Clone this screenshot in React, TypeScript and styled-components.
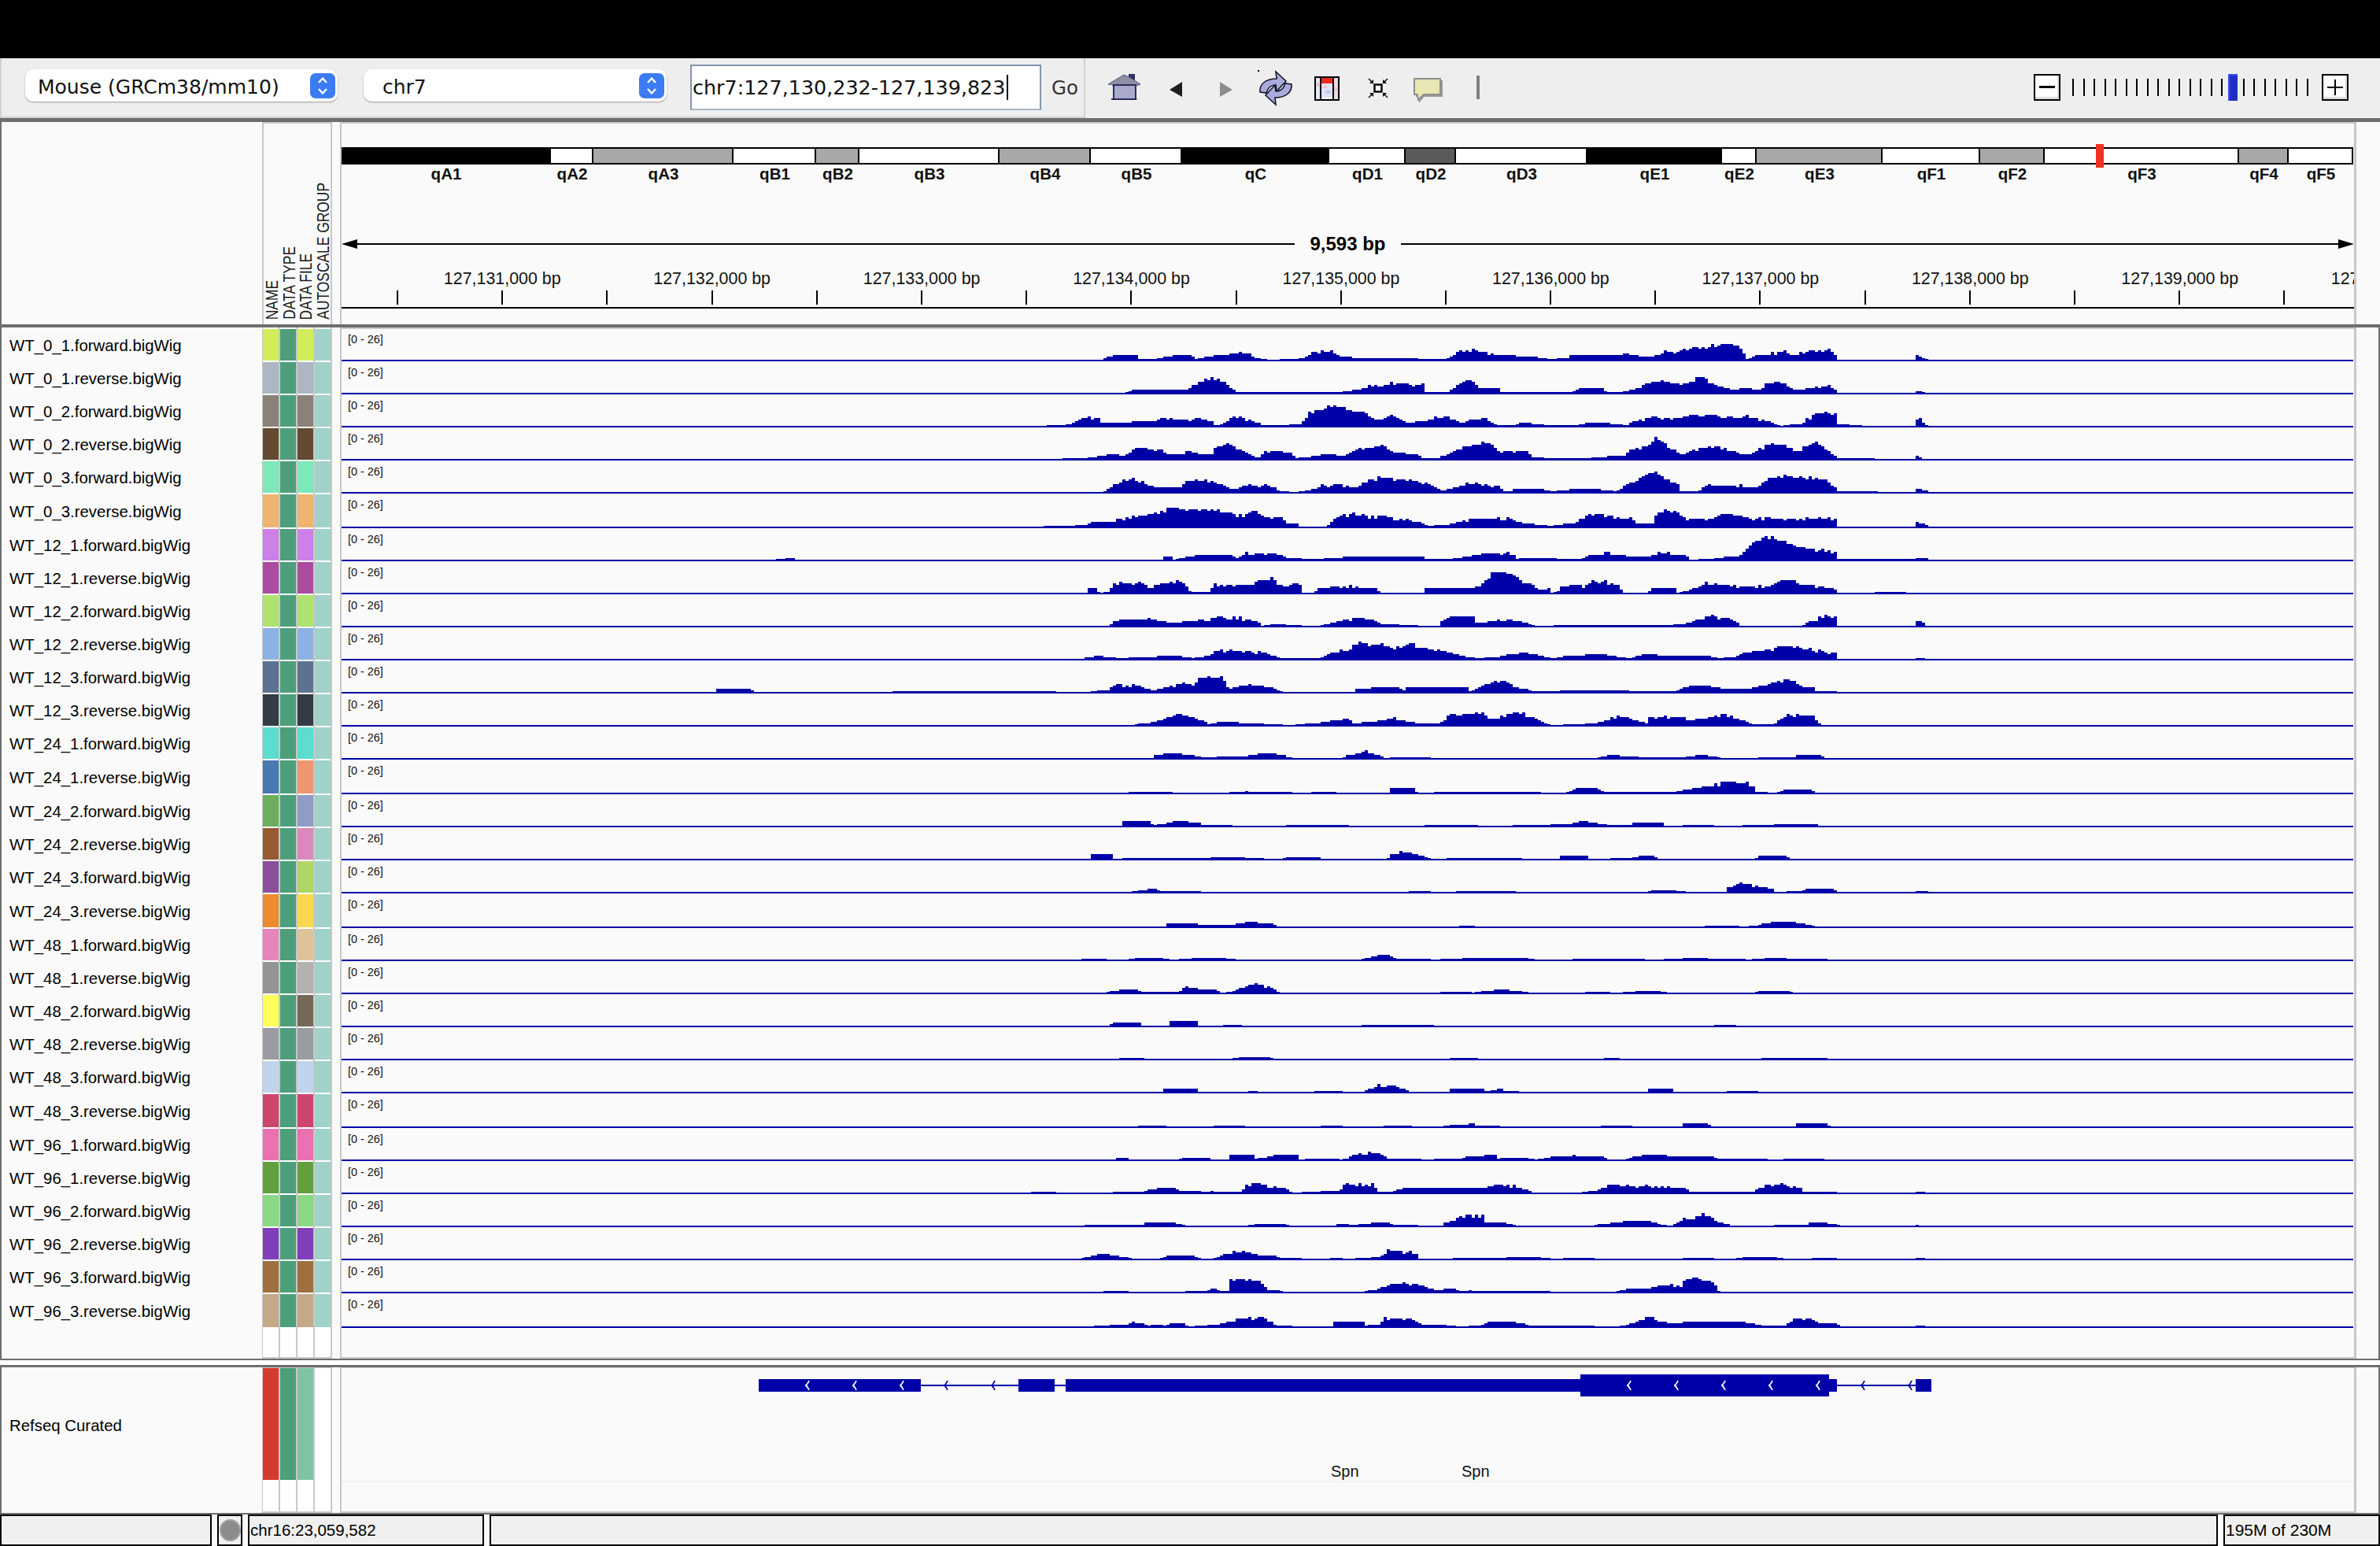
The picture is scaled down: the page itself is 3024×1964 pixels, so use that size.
import React from "react";
import styled, { createGlobalStyle } from "styled-components";

const BLUE = "#0000a8";
const RULE = "#6e6e6e";
const SOFT = "#c8c8c8";
const PANEL = "#fafafa";
const DATA_LEFT = 434;
const DATA_RIGHT = 2990;
const BIN = 4;

const GlobalStyle = createGlobalStyle`
  html, body {
    margin: 0;
    padding: 0;
    background: #ffffff;
  }
  body {
    font-family: "Liberation Sans", Arial, sans-serif;
    color: #000000;
  }
`;

const Page = styled.div`
  width: 3024px;
  height: 1964px;
  overflow: hidden;
  display: flex;
  flex-direction: column;
  background: #ffffff;
`;

const TitleBar = styled.div`
  height: 74px;
  background: #000000;
`;

const Toolbar = styled.div`
  height: 76px;
  display: flex;
  align-items: stretch;
  background: #eeeeee;
  padding-right: 40px;
`;

const LocationBar = styled.div`
  width: 1379px;
  box-sizing: border-box;
  display: flex;
  align-items: center;
  padding-left: 30px;
  border: solid #d2d2d2;
  border-width: 0 2px 2px 2px;
  font-family: "DejaVu Sans", sans-serif;
  font-size: 25px;
  color: #111111;
`;

const Combo = styled.div<{ $width: number; $gap: number; $inset: number }>`
  width: ${(p) => p.$width}px;
  height: 41px;
  box-sizing: border-box;
  margin-right: ${(p) => p.$gap}px;
  margin-top: -5px;
  padding: 0 3px 0 ${(p) => p.$inset}px;
  display: flex;
  align-items: center;
  justify-content: space-between;
  background: #ffffff;
  border-radius: 10px;
  box-shadow: 0 1px 2px rgba(0, 0, 0, 0.35);
`;

const ComboText = styled.span`
  margin-top: 3px;
`;

const Stepper = styled.div`
  width: 32px;
  height: 32px;
  border-radius: 7px;
  background: #3b7cf5;
  display: flex;
  align-items: center;
  justify-content: center;
`;

const LocusInput = styled.div`
  width: 446px;
  height: 58px;
  box-sizing: border-box;
  display: flex;
  align-items: center;
  padding-left: 1px;
  border: 2px solid #8296ad;
  border-bottom-color: #a8b6c6;
  background: #ffffff;
  font-size: 25.4px;
  white-space: nowrap;
`;

const Caret = styled.span`
  width: 2px;
  height: 32px;
  margin-left: 2px;
  background: #000000;
`;

const GoLabel = styled.div`
  margin-left: 13px;
  font-size: 24.5px;
  color: #333333;
`;

const NavIcons = styled.div`
  display: flex;
  align-items: center;
  margin-left: 29px;
  height: 76px;
`;

const NavIcon = styled.svg<{ $left: number; $lift: number }>`
  display: block;
  flex: none;
  overflow: visible;
  margin-left: ${(p) => p.$left}px;
  transform: translateY(${(p) => p.$lift}px);
`;

const ZoomSlider = styled.div`
  margin-left: auto;
  display: flex;
  align-items: center;
  height: 73px;
  gap: 15px;
`;

const ZoomButton = styled.div`
  width: 34px;
  height: 34px;
  box-sizing: border-box;
  border: 2px solid #000000;
  background: #ffffff;
  box-shadow: inset -2px -3px 0 #dddddd;
  display: flex;
  align-items: center;
  justify-content: center;
`;

const ZoomTicks = styled.div`
  width: 300px;
  height: 34px;
  margin-right: 2px;
  display: flex;
  align-items: center;
  justify-content: space-between;
`;

const ZoomTick = styled.div`
  width: 2px;
  height: 22px;
  background: #000000;
`;

const ZoomThumb = styled.div`
  width: 12px;
  height: 34px;
  margin: 0 -5px;
  background: #2030c4;
  box-shadow: inset 2px 2px 0 #3a50e8;
`;

const Rule = styled.div<{ $height: number }>`
  height: ${(p) => p.$height}px;
  background: ${RULE};
`;

const Gap = styled.div`
  height: 6px;
  background: #ffffff;
`;

const Panel = styled.div<{ $height: number }>`
  height: ${(p) => p.$height}px;
  display: flex;
  flex-direction: column;
  background: ${PANEL};
`;

const Row = styled.div<{ $height?: number }>`
  display: grid;
  grid-template-columns: 333px 89px 10px 2559px 33px;
  grid-template-rows: minmax(0, 1fr);
  flex: ${(p) => (p.$height ? "none" : "1")};
  height: ${(p) => (p.$height ? `${p.$height}px` : "auto")};
  min-height: 0;
`;

const NameCell = styled.div`
  box-sizing: border-box;
  border-left: 2px solid ${RULE};
  padding-left: 10px;
  display: flex;
  align-items: center;
  font-size: 20.4px;
  white-space: nowrap;
  background: ${PANEL};
`;

const GeneNameCell = styled(NameCell)`
  padding-top: 4px;
`;

const AttrCell = styled.div`
  display: grid;
  grid-template-columns: repeat(4, 20px);
  column-gap: 2px;
  padding: 0 2px 0 1px;
  background: ${SOFT};
`;

const GeneAttrCell = styled(AttrCell)`
  padding-top: 1px;
`;

const Swatch = styled.div<{ $color: string }>`
  background: ${(p) => p.$color};
  border-bottom: 2px solid #ffffff;
`;

const Blank = styled.div`
  background: #ffffff;
`;

const Gutter = styled.div`
  background: ${PANEL};
`;

const DataCell = styled.div<{ $cap?: boolean; $open?: boolean }>`
  position: relative;
  box-sizing: border-box;
  border-left: 2px solid ${SOFT};
  background: ${(p) => (p.$cap ? SOFT : PANEL)};
  overflow: ${(p) => (p.$open ? "visible" : "hidden")};
  z-index: ${(p) => (p.$open ? 1 : "auto")};
`;

const SidePad = styled.div<{ $edge?: boolean }>`
  box-sizing: border-box;
  border-left: 3px solid ${SOFT};
  border-right: ${(p) => (p.$edge ? `2px solid ${RULE}` : "none")};
  background: ${PANEL};
`;

const HeaderAttr = styled.div`
  box-sizing: border-box;
  border: solid ${SOFT};
  border-width: 2px 2px 0 2px;
  background: ${PANEL};
  display: grid;
  grid-template-columns: repeat(4, 21.5px);
  align-items: end;
  padding-bottom: 6px;
`;

const AttrTitle = styled.div`
  writing-mode: vertical-rl;
  transform: rotate(180deg) scaleX(1.3);
  font-size: 17.4px;
  line-height: 21px;
  white-space: nowrap;
  color: #1a1a1a;
`;

const HeaderData = styled.div`
  box-sizing: border-box;
  height: 100%;
  border-top: 2px solid ${SOFT};
  display: flex;
  flex-direction: column;
`;

const Cytoband = styled.div`
  position: relative;
  display: flex;
  margin-top: 30px;
  width: 2557px;
`;

const BandColumn = styled.div`
  flex: none;
  display: flex;
  flex-direction: column;
  align-items: center;
`;

const BandBar = styled.div<{ $stain: string }>`
  align-self: stretch;
  height: 22px;
  box-sizing: border-box;
  border: solid #000000;
  border-width: 2px 2px 2px 0;
  background: ${(p) => p.$stain};
`;

const BandName = styled.div`
  font-size: 20.6px;
  font-weight: bold;
  line-height: 24px;
  margin-bottom: 1px;
  white-space: nowrap;
  color: #111111;
`;

const Marker = styled.div`
  position: absolute;
  top: -4px;
  width: 10px;
  height: 30px;
  background: #ee3124;
`;

const SpanRow = styled.div`
  display: flex;
  align-items: center;
  height: 28px;
  margin-top: 62px;
`;

const SpanLine = styled.div`
  flex: 1;
  height: 2px;
  background: #000000;
`;

const SpanText = styled.div`
  width: 135px;
  text-align: center;
  font-size: 24px;
  font-weight: bold;
  line-height: 28px;
`;

const RulerLabels = styled.div`
  display: flex;
  margin-top: 16px;
  padding-left: 71px;
  overflow: hidden;
  width: 2557px;
  box-sizing: border-box;
`;

const RulerLabel = styled.div`
  flex: none;
  width: 266.45px;
  text-align: center;
  font-size: 21.4px;
  line-height: 28px;
  white-space: nowrap;
  color: #111111;
`;

const RulerTicks = styled.div`
  display: flex;
  margin-top: 1px;
  padding-left: 70px;
`;

const RulerTick = styled.div`
  flex: none;
  width: 133.2px;
  height: 18px;
  box-sizing: border-box;
  border-left: 2px solid #000000;
`;

const RulerLine = styled.div`
  margin-top: 3px;
  height: 2px;
  background: #000000;
`;

const RangeLabel = styled.div`
  position: absolute;
  left: 8px;
  top: 5px;
  font-size: 14.4px;
  line-height: 16px;
  color: #111111;
  white-space: nowrap;
`;

const Chart = styled.svg`
  display: block;
  width: 2557px;
  height: 100%;
`;

const GeneChart = styled(Chart)`
  height: 185px;
`;

const GeneName = styled.div<{ $left: number }>`
  position: absolute;
  left: ${(p) => p.$left}px;
  top: 120px;
  font-size: 20px;
  line-height: 24px;
  color: #111111;
`;

const StatusBar = styled.div`
  height: 40px;
  display: flex;
  gap: 7px;
  background: ${PANEL};
`;

const StatusCell = styled.div<{ $width?: number; $size?: number }>`
  box-sizing: border-box;
  flex: ${(p) => (p.$width ? `0 0 ${p.$width}px` : "1")};
  border: 2px solid #000000;
  background: #f0f0f0;
  display: flex;
  align-items: center;
  font-size: ${(p) => p.$size ?? 20.5}px;
  padding-left: 1px;
  white-space: nowrap;
`;

const StatusLamp = styled.div`
  width: 27px;
  height: 28px;
  border-radius: 50%;
  background: #8c8c8c;
  border: 2px solid #a2a2a2;
  box-sizing: border-box;
`;

type Point = [number, number];

interface TrackType {
  name: string;
  nameColor: string;
  fileColor: string;
  tall?: boolean;
  profile: Point[];
}

const upper = (z: number) => 1350 + z / 1.4255;
const lower = (z: number) => 1300 + z / 1.3635;

const upperProfiles: Point[][] = [
  [[70,0],[90,5],[135,5],[140,1],[170,1],[200,5],[235,5],[240,1],[285,6],[335,9],[350,2],[380,0],[440,2],[450,9],[485,13],[500,5],[540,2],[590,2],[610,3],[655,1],[695,1],[710,7],[742,13],[790,6],[855,4],[880,1],[915,2],[920,5],[975,5],[1015,8],[1060,3],[1090,9],[1120,12],[1170,15],[1190,21],[1225,18],[1240,1],[1255,5],[1305,10],[1330,5],[1350,11],[1390,11],[1403,5],[1404,0],[1545,0],[1546,6],[1560,2],[1568,1]],
  [[115,0],[125,3],[170,5],[185,3],[230,5],[240,10],[265,19],[295,13],[315,1],[355,1],[445,1],[500,1],[540,4],[555,8],[590,9],[600,13],[655,9],[656,1],[700,1],[715,10],[740,17],[755,6],[790,5],[795,1],[835,1],[925,1],[935,5],[975,7],[985,1],[1010,1],[1040,5],[1075,14],[1130,12],[1158,20],[1190,8],[1220,3],[1230,7],[1265,3],[1275,10],[1305,13],[1330,3],[1365,7],[1390,7],[1403,2],[1404,0],[1545,0],[1546,3],[1560,1],[1568,0]],
  [[-60,0],[0,1],[15,2],[35,9],[68,9],[70,5],[100,3],[135,6],[170,7],[185,11],[225,7],[270,7],[275,1],[290,2],[305,9],[330,9],[355,4],[360,1],[395,1],[430,2],[450,17],[490,25],[540,17],[570,7],[595,13],[625,4],[660,7],[665,9],[700,9],[730,3],[735,9],[770,7],[790,1],[820,1],[825,3],[850,3],[880,1],[930,1],[945,3],[990,3],[1025,1],[1030,5],[1075,13],[1100,8],[1160,15],[1210,11],[1240,13],[1285,5],[1300,0],[1340,3],[1368,17],[1402,16],[1403,2],[1445,1],[1448,0],[1545,0],[1546,9],[1558,9],[1560,1],[1568,1]],
  [[-40,0],[40,1],[65,3],[100,7],[110,3],[135,13],[145,15],[185,9],[195,5],[220,5],[225,9],[270,5],[275,13],[305,19],[330,9],[355,1],[365,7],[418,7],[420,1],[450,3],[480,7],[510,3],[530,11],[580,17],[600,9],[645,5],[650,1],[680,1],[710,10],[745,18],[775,20],[790,9],[845,9],[850,3],[880,1],[905,1],[950,1],[985,3],[1020,5],[1030,13],[1060,16],[1075,29],[1090,20],[1120,5],[1140,11],[1185,17],[1215,8],[1245,5],[1280,17],[1303,17],[1330,9],[1365,21],[1390,9],[1405,1],[1470,1],[1472,0],[1545,0],[1546,5],[1555,1]],
  [[75,0],[100,11],[125,16],[160,8],[180,5],[210,7],[230,13],[270,13],[310,3],[330,8],[375,9],[395,1],[425,0],[450,3],[470,7],[500,10],[530,5],[575,19],[620,15],[640,13],[670,7],[690,1],[705,5],[755,13],[765,7],[795,7],[796,1],[815,1],[816,3],[870,3],[890,1],[950,5],[975,3],[1005,1],[1030,13],[1070,25],[1115,9],[1120,1],[1150,1],[1170,9],[1230,7],[1260,5],[1275,17],[1310,21],[1385,15],[1403,5],[1404,1],[1545,0],[1546,5],[1568,1]],
  [[-33,0],[-30,1],[0,1],[45,2],[50,5],[75,5],[100,9],[130,13],[165,17],[190,21],[230,23],[290,19],[325,13],[340,17],[360,17],[365,11],[395,13],[405,5],[425,3],[430,0],[480,0],[490,9],[525,17],[555,13],[600,11],[650,5],[665,1],[700,3],[735,9],[770,9],[805,11],[830,5],[885,1],[930,5],[950,15],[980,15],[1035,9],[1040,3],[1070,3],[1075,17],[1105,21],[1135,9],[1170,9],[1205,17],[1245,9],[1305,11],[1360,9],[1385,11],[1403,7],[1404,0],[1545,0],[1546,7],[1568,1]],
  [[-520,0],[-518,1],[-485,2],[-483,0],[184,0],[185,4],[200,4],[201,0],[240,5],[300,7],[315,2],[335,9],[385,8],[408,2],[460,1],[510,3],[640,3],[655,4],[650,1],[705,1],[760,7],[795,9],[820,5],[821,1],[830,2],[845,2],[940,1],[955,5],[990,8],[1030,4],[1060,4],[1085,8],[1130,5],[1135,0],[1172,1],[1225,5],[1250,20],[1275,30],[1330,17],[1355,14],[1400,8],[1405,1],[1545,1],[1546,2],[1568,2]],
];

const lowerProfiles: Point[][] = [
  [[110,0],[112,5],[130,5],[131,0],[150,1],[155,12],[205,12],[225,6],[235,11],[265,14],[285,8],[290,1],[325,1],[330,10],[385,10],[430,18],[450,9],[480,9],[485,0],[505,0],[510,5],[550,9],[580,7],[615,5],[618,0],[695,0],[696,5],[770,7],[790,9],[820,28],[845,25],[870,12],[895,3],[915,6],[916,0],[928,3],[930,7],[965,7],[990,15],[1020,12],[1040,3],[1041,0],[1085,0],[1086,5],[1130,5],[1131,0],[1150,2],[1185,12],[1240,7],[1290,9],[1320,16],[1370,8],[1405,6],[1410,0],[1475,0],[1476,1],[1530,1],[1532,0]],
  [[150,0],[155,5],[180,9],[230,7],[265,3],[275,5],[325,9],[370,11],[410,4],[415,0],[430,2],[480,1],[482,0],[515,0],[525,2],[560,8],[605,9],[622,2],[685,1],[688,0],[722,0],[725,5],[735,11],[780,11],[782,3],[805,5],[835,9],[865,5],[885,1],[887,0],[955,1],[990,1],[1020,1],[1120,1],[1130,2],[1150,3],[1190,13],[1235,7],[1242,1],[1245,0],[1350,0],[1365,7],[1395,12],[1408,12],[1410,0],[1545,0],[1546,7],[1565,4]],
  [[105,0],[110,2],[130,4],[165,1],[230,3],[260,5],[295,1],[320,4],[335,9],[370,11],[420,7],[445,1],[515,1],[540,9],[565,11],[570,17],[595,21],[600,16],[620,18],[650,13],[675,18],[700,11],[720,12],[765,3],[790,1],[825,3],[860,9],[890,5],[920,1],[945,4],[1000,6],[1050,1],[1085,7],[1115,3],[1130,4],[1185,4],[1205,1],[1235,3],[1255,9],[1285,10],[1320,17],[1380,9],[1410,7],[1412,0],[1545,0],[1546,1],[1560,1]],
  [[-532,0],[-530,3],[-470,3],[-468,0],[18,1],[55,1],[60,0],[118,0],[120,1],[150,3],[152,8],[195,9],[225,2],[240,5],[265,9],[300,9],[305,17],[345,17],[360,4],[380,9],[425,7],[445,1],[450,0],[575,0],[577,3],[600,5],[650,5],[660,2],[662,5],[770,5],[772,1],[785,3],[790,8],[835,14],[850,7],[885,1],[920,1],[965,3],[1030,2],[1070,1],[1130,1],[1150,7],[1180,8],[1225,3],[1255,3],[1270,6],[1325,17],[1350,7],[1372,5],[1374,1],[1410,1],[1412,0]],
  [[195,0],[197,2],[220,3],[245,8],[270,14],[320,4],[322,1],[335,3],[375,3],[430,1],[470,0],[475,1],[505,2],[560,8],[575,2],[625,6],[640,8],[690,2],[695,2],[725,3],[740,14],[800,14],[805,8],[855,16],[885,9],[912,1],[915,0],[955,1],[990,2],[1040,11],[1080,2],[1085,9],[1145,10],[1150,5],[1210,12],[1250,6],[1265,1],[1300,1],[1320,11],[1370,11],[1382,1],[1384,0]],
  [[225,0],[226,3],[258,7],[295,3],[315,1],[332,1],[340,2],[390,3],[420,7],[455,3],[458,1],[470,0],[555,0],[560,3],[595,8],[625,2],[626,0],[650,1],[703,1],[705,0],[995,0],[1000,2],[1020,4],[1050,2],[1085,1],[1140,1],[1175,4],[1205,1],[1207,0],[1335,1],[1340,3],[1385,3],[1388,0]],
  [[183,0],[185,1],[330,0],[382,1],[386,3],[390,1],[435,1],[495,0],[500,1],[540,1],[545,0],[633,0],[634,6],[680,6],[682,0],[740,1],[855,1],[940,0],[955,5],[995,5],[1010,1],[1060,1],[1125,1],[1160,5],[1205,10],[1220,15],[1265,10],[1270,1],[1305,0],[1318,4],[1368,3],[1370,0]],
  [[115,0],[172,0],[173,6],[222,6],[224,1],[250,3],[262,6],[308,4],[310,1],[410,0],[500,1],[630,0],[760,1],[815,0],[945,2],[970,6],[1015,1],[1055,1],[1058,3],[1108,3],[1110,0],[1175,1],[1220,0],[1330,2],[1375,2],[1378,0]],
  [[117,0],[118,6],[155,6],[157,0],[185,1],[290,1],[360,2],[385,3],[386,1],[445,0],[460,2],[515,2],[517,0],[632,0],[635,5],[665,9],[705,1],[706,0],[760,1],[800,1],[930,0],[931,4],[978,4],[980,0],[1050,1],[1065,3],[1095,3],[1100,0],[1270,0],[1272,3],[1325,3],[1327,0]],
  [[180,0],[205,2],[225,4],[240,1],[250,1],[305,1],[306,0],[665,0],[666,1],[703,1],[705,0],[800,1],[855,1],[857,0],[1078,0],[1100,3],[1145,1],[1148,0],[1216,0],[1218,4],[1240,11],[1270,8],[1300,3],[1302,0],[1345,1],[1370,5],[1405,4],[1410,0],[1545,0],[1546,1],[1568,1]],
  [[248,0],[249,3],[290,5],[305,2],[365,2],[388,6],[436,3],[438,0],[755,0],[756,1],[780,1],[782,0],[1183,0],[1184,1],[1238,1],[1240,0],[1270,1],[1280,4],[1320,7],[1372,1],[1374,0]],
  [[98,0],[100,1],[145,1],[147,0],[175,0],[210,3],[250,1],[252,0],[285,1],[310,3],[365,1],[367,0],[585,0],[612,5],[635,5],[650,1],[705,1],[706,0],[735,1],[845,3],[885,1],[887,0],[1020,1],[1078,1],[1080,0],[1135,1],[1165,3],[1190,1],[1250,1],[1252,0],[1270,1],[1318,3],[1325,1],[1395,1],[1397,0]],
  [[142,0],[143,1],[195,5],[208,1],[270,1],[285,9],[300,5],[337,3],[340,0],[360,1],[385,9],[405,13],[440,3],[443,0],[722,0],[723,1],[775,1],[776,0],[790,1],[825,4],[873,1],[875,0],[974,0],[975,1],[1017,1],[1018,0],[1055,1],[1072,3],[1115,1],[1117,0],[1265,0],[1266,1],[1300,3],[1335,1],[1337,0]],
  [[152,0],[153,4],[203,4],[205,0],[255,0],[256,6],[300,6],[301,0],[345,0],[346,1],[378,1],[380,0],[585,0],[586,1],[650,1],[655,1],[675,1],[713,1],[715,0],[1197,0],[1198,1],[1232,1],[1234,0]],
  [[165,0],[166,1],[208,1],[210,0],[360,0],[375,2],[415,3],[432,1],[434,0],[736,0],[737,1],[788,1],[790,0],[1005,0],[1006,1],[1030,1],[1032,0],[1276,0],[1277,1],[1392,1],[1394,0]],
  [[243,0],[244,3],[300,3],[302,0],[388,0],[390,1],[408,1],[410,0],[505,0],[506,1],[555,1],[557,0],[590,0],[595,2],[620,8],[645,7],[668,2],[670,0],[740,0],[741,3],[775,4],[796,4],[800,1],[820,2],[830,5],[835,1],[883,0],[1080,0],[1081,3],[1125,3],[1127,0],[1220,0],[1221,1],[1272,1],[1274,0]],
  [[197,0],[198,1],[248,1],[250,0],[330,0],[331,1],[385,1],[387,0],[515,0],[516,1],[555,1],[557,0],[622,0],[623,1],[670,1],[672,0],[725,0],[726,1],[770,3],[782,3],[785,1],[827,1],[829,0],[1000,0],[1001,1],[1052,1],[1054,0],[1140,0],[1141,3],[1188,3],[1190,0],[1338,0],[1339,3],[1392,3],[1398,0]],
  [[158,0],[159,2],[182,2],[184,0],[266,0],[285,3],[322,2],[324,0],[355,0],[356,5],[400,7],[402,1],[425,3],[440,6],[475,5],[478,0],[495,1],[548,1],[550,0],[562,1],[575,7],[605,10],[627,6],[628,1],[687,1],[689,0],[712,0],[713,1],[760,1],[765,3],[800,5],[820,5],[822,1],[843,3],[885,1],[887,0],[915,3],[950,3],[953,10],[956,3],[1008,3],[1010,0],[1045,0],[1060,4],[1095,7],[1135,3],[1145,3],[1190,5],[1205,1],[1287,1],[1289,0],[1340,1],[1385,1],[1387,0]],
  [[14,1],[56,1],[58,0],[153,0],[154,1],[210,1],[214,3],[255,7],[275,2],[310,2],[312,0],[327,2],[335,1],[380,1],[385,7],[410,11],[440,7],[462,4],[464,0],[505,1],[550,3],[556,9],[610,9],[612,1],[640,1],[660,6],[695,7],[715,5],[770,5],[785,6],[830,11],[865,5],[882,1],[884,0],[965,0],[995,3],[1010,9],[1050,9],[1070,7],[1110,8],[1150,5],[1155,1],[1190,1],[1250,1],[1268,1],[1272,5],[1315,11],[1350,5],[1352,1],[1410,1],[1412,0],[1545,0],[1546,1],[1560,1]],
  [[105,0],[106,1],[158,1],[160,0],[165,1],[208,1],[210,3],[232,3],[262,3],[278,1],[280,0],[392,0],[393,1],[425,3],[462,1],[464,0],[540,0],[542,3],[575,1],[590,2],[630,5],[640,1],[683,1],[685,0],[728,0],[730,3],[760,11],[800,11],[802,4],[838,3],[853,1],[855,0],[988,0],[990,1],[1040,5],[1088,5],[1105,1],[1125,0],[1140,7],[1180,14],[1200,6],[1225,1],[1228,0],[1298,0],[1300,1],[1360,1],[1362,3],[1395,3],[1412,1],[1414,0],[1545,0],[1546,1],[1552,0]],
  [[100,0],[102,1],[130,5],[150,5],[185,1],[187,0],[237,0],[250,3],[290,4],[305,1],[307,0],[330,0],[345,5],[360,7],[402,9],[405,3],[440,3],[445,1],[482,1],[484,0],[530,0],[531,1],[553,1],[555,0],[600,1],[620,3],[632,9],[655,9],[684,6],[686,0],[745,0],[746,1],[830,1],[865,3],[910,1],[912,0],[935,0],[936,1],[988,1],[990,0],[1140,0],[1141,1],[1197,1],[1199,0],[1235,0],[1236,1],[1270,3],[1315,1],[1317,0],[1365,0],[1366,1],[1410,1],[1412,0],[1545,0],[1546,1],[1560,1]],
  [[140,0],[141,1],[183,1],[185,0],[280,0],[281,1],[320,1],[322,3],[338,3],[340,1],[355,1],[356,13],[385,17],[410,13],[425,3],[448,1],[450,0],[590,0],[592,1],[615,3],[635,9],[685,9],[710,3],[725,1],[726,3],[752,3],[754,1],[772,1],[775,3],[778,1],[880,1],[910,1],[912,0],[1025,0],[1045,3],[1075,3],[1100,7],[1140,7],[1145,13],[1155,17],[1195,13],[1205,1],[1207,0]],
  [[105,0],[140,1],[180,3],[190,6],[220,1],[225,3],[245,1],[255,3],[280,3],[285,0],[310,1],[340,3],[380,9],[410,11],[432,5],[440,1],[490,0],[535,0],[536,5],[590,6],[592,1],[620,3],[625,9],[670,11],[690,3],[745,1],[750,0],[790,1],[810,6],[850,6],[880,1],[950,1],[1025,0],[1045,1],[1075,9],[1100,9],[1120,3],[1145,5],[1200,7],[1250,5],[1285,1],[1320,1],[1335,9],[1365,9],[1385,3],[1412,3],[1414,0],[1545,0],[1546,1],[1560,1]],
];

const profiles: Point[][] = [
  ...upperProfiles.map((p) => p.map(([z, h]): Point => [upper(z), h])),
  ...lowerProfiles.map((p) => p.map(([z, h]): Point => [lower(z), h])),
];

const trackMeta: [string, string, string][] = [
  ["WT_0_1.forward.bigWig", "#d2ed5c", "#d2ed5c"],
  ["WT_0_1.reverse.bigWig", "#acb7c3", "#acb7c3"],
  ["WT_0_2.forward.bigWig", "#8a8278", "#8a8278"],
  ["WT_0_2.reverse.bigWig", "#634a30", "#634a30"],
  ["WT_0_3.forward.bigWig", "#7de8b8", "#7de8b8"],
  ["WT_0_3.reverse.bigWig", "#f0b472", "#f0b472"],
  ["WT_12_1.forward.bigWig", "#cc80e8", "#cc80e8"],
  ["WT_12_1.reverse.bigWig", "#ac4ca0", "#ac4ca0"],
  ["WT_12_2.forward.bigWig", "#ade36e", "#ade36e"],
  ["WT_12_2.reverse.bigWig", "#8cb2e3", "#8cb2e3"],
  ["WT_12_3.forward.bigWig", "#5d7291", "#5d7291"],
  ["WT_12_3.reverse.bigWig", "#333b47", "#333b47"],
  ["WT_24_1.forward.bigWig", "#5ddcd0", "#5ddcd0"],
  ["WT_24_1.reverse.bigWig", "#4a78b0", "#ee9670"],
  ["WT_24_2.forward.bigWig", "#6cae5c", "#8e9cc6"],
  ["WT_24_2.reverse.bigWig", "#985a30", "#db88bc"],
  ["WT_24_3.forward.bigWig", "#8c4f9c", "#b0d668"],
  ["WT_24_3.reverse.bigWig", "#ee8a30", "#f8d650"],
  ["WT_48_1.forward.bigWig", "#e685bc", "#dfc398"],
  ["WT_48_1.reverse.bigWig", "#949494", "#b2b2b2"],
  ["WT_48_2.forward.bigWig", "#ffff5a", "#756a58"],
  ["WT_48_2.reverse.bigWig", "#999ca0", "#999ca0"],
  ["WT_48_3.forward.bigWig", "#bfd4ec", "#bfd4ec"],
  ["WT_48_3.reverse.bigWig", "#cb456c", "#cb456c"],
  ["WT_96_1.forward.bigWig", "#ea72b0", "#ea72b0"],
  ["WT_96_1.reverse.bigWig", "#61a03c", "#61a03c"],
  ["WT_96_2.forward.bigWig", "#8ad884", "#8ad884"],
  ["WT_96_2.reverse.bigWig", "#803fb8", "#803fb8"],
  ["WT_96_3.forward.bigWig", "#a06f40", "#a06f40"],
  ["WT_96_3.reverse.bigWig", "#c4a888", "#c4a888"],
];

const tallRows = [5, 13, 17, 23, 29];

const tracks: TrackType[] = trackMeta.map(([name, nameColor, fileColor], i) => ({
  name,
  nameColor,
  fileColor,
  tall: tallRows.includes(i),
  profile: profiles[i],
}));

const heightAt = (profile: Point[], x: number) => {
  for (let i = 1; i < profile.length; i++) {
    const [x0, h0] = profile[i - 1];
    const [x1, h1] = profile[i];
    if (x >= x0 && x <= x1) {
      return x1 === x0 ? h1 : h0 + ((h1 - h0) * (x - x0)) / (x1 - x0);
    }
  }
  return 0;
};

const wigglePath = (profile: Point[], base: number, seed: number) => {
  let d = `M${DATA_LEFT} ${base}`;
  for (let x = DATA_LEFT; x < DATA_RIGHT; x += BIN) {
    let h = heightAt(profile, x + BIN / 2);
    const n = Math.sin(x * 12.9898 + seed * 78.233) * 43758.5453;
    const r = n - Math.floor(n);
    if (h >= 7) h += r < 0.2 ? -2 : r > 0.8 ? 2 : 0;
    h = h < 1.5 ? Math.round(h) : Math.round(h / 2) * 2;
    d += `V${base - h}H${x + BIN}`;
  }
  return `${d}V${base}Z`;
};

const bands: { name: string; end: number; stain: string }[] = [
  { name: "qA1", end: 700, stain: "#000000" },
  { name: "qA2", end: 754, stain: "#ffffff" },
  { name: "qA3", end: 932, stain: "#a8a8a8" },
  { name: "qB1", end: 1037, stain: "#ffffff" },
  { name: "qB2", end: 1092, stain: "#a8a8a8" },
  { name: "qB3", end: 1270, stain: "#ffffff" },
  { name: "qB4", end: 1386, stain: "#a8a8a8" },
  { name: "qB5", end: 1502, stain: "#ffffff" },
  { name: "qC", end: 1689, stain: "#000000" },
  { name: "qD1", end: 1786, stain: "#ffffff" },
  { name: "qD2", end: 1850, stain: "#5a5a5a" },
  { name: "qD3", end: 2017, stain: "#ffffff" },
  { name: "qE1", end: 2188, stain: "#000000" },
  { name: "qE2", end: 2232, stain: "#ffffff" },
  { name: "qE3", end: 2392, stain: "#a8a8a8" },
  { name: "qF1", end: 2516, stain: "#ffffff" },
  { name: "qF2", end: 2598, stain: "#a8a8a8" },
  { name: "qF3", end: 2845, stain: "#ffffff" },
  { name: "qF4", end: 2908, stain: "#a8a8a8" },
  { name: "qF5", end: 2990, stain: "#ffffff" },
];

const rulerStops = [131, 132, 133, 134, 135, 136, 137, 138, 139, 140];
const tickCount = 19;
const sliderSlots = 23;
const sliderThumb = 15;

const StepperIcon: React.FC = () => (
  <svg width="14" height="24" viewBox="0 0 14 24" fill="none" stroke="#ffffff" strokeWidth="2.4">
    <path d="M2 8 L7 2.5 L12 8" />
    <path d="M2 16 L7 21.5 L12 16" />
  </svg>
);

const HomeIcon: React.FC = () => (
  <NavIcon $left={0} $lift={-1} width="42" height="34" viewBox="0 0 42 34">
    <rect x="26" y="0" width="8" height="8" fill="#2f2f68" />
    <path d="M0 13 L20 1 L27 4 L41 13 L36 15 L6 15 Z" fill="#8e8ea6" stroke="#55557a" strokeWidth="1" />
    <rect x="7" y="14" width="28" height="18" fill="#a9a9cb" stroke="#2c2c5c" strokeWidth="2" />
    <rect x="4" y="31" width="34" height="2" fill="#2c2c5c" />
    <path d="M37 15 V33 M0 15 H5" stroke="#ffffff" strokeWidth="1.5" />
  </NavIcon>
);

const ArrowIcon: React.FC<{ left: number; back?: boolean }> = ({ left, back }) => (
  <NavIcon $left={left} $lift={1} width="16" height="19" viewBox="0 0 16 19">
    {back ? (
      <path d="M0 10 L16 0 L16 19 Z" fill="#1e1e1e" />
    ) : (
      <path d="M16 10 L0 0 L0 19 Z" fill="#8c8c8c" />
    )}
  </NavIcon>
);

const RefreshIcon: React.FC = () => (
  <NavIcon $left={34} $lift={0} width="42" height="44" viewBox="0 0 42 44">
    <rect x="-2" y="-1" width="2" height="2" fill="#000000" />
    <g fill="#a9abdc" stroke="#15152a" strokeWidth="1.6" strokeLinejoin="miter">
      <path d="M1 27 C0 17 8 10 22 10 L21 1 L34 13 L22 26 L21 18 C15 18 11 21 9 28 Z" />
      <path d="M41 17 C42 27 34 34 20 34 L21 43 L8 31 L20 18 L21 26 C27 26 31 23 33 16 Z" />
    </g>
  </NavIcon>
);

const RegionIcon: React.FC = () => (
  <NavIcon $left={28} $lift={0} width="32" height="31" viewBox="0 0 32 31">
    <rect x="0" y="0" width="32" height="31" fill="#000000" />
    <rect x="2" y="2" width="28" height="27" fill="#ffffff" />
    <rect x="2" y="2" width="5" height="27" fill="#e6e6f8" />
    <rect x="25" y="2" width="5" height="27" fill="#ecd9e0" />
    <rect x="7" y="2" width="2" height="27" fill="#000000" />
    <rect x="23" y="2" width="2" height="27" fill="#000000" />
    <rect x="9" y="2" width="14" height="7" fill="#ee2a1c" />
    <rect x="9" y="9" width="14" height="18" fill="#dfe2f6" />
    <rect x="10" y="12" width="6" height="3" fill="#eec8c4" />
    <rect x="14" y="18" width="7" height="4" fill="#c4c8f0" />
    <rect x="3" y="8" width="3" height="5" fill="#eebcbc" />
    <rect x="26" y="14" width="3" height="4" fill="#eebcbc" />
  </NavIcon>
);

const CollapseIcon: React.FC = () => (
  <NavIcon $left={36} $lift={0} width="26" height="26" viewBox="0 0 26 26">
    <rect x="8.5" y="8.5" width="9" height="9" fill="#ffffff" stroke="#000000" strokeWidth="2.4" />
    <g stroke="#000000" strokeWidth="1.4">
      <path d="M1 1 L6 6 M25 1 L20 6 M1 25 L6 20 M25 25 L20 20" />
    </g>
    <g fill="#000000">
      <path d="M7 7 V2 L2 7 Z" />
      <path d="M19 7 V2 L24 7 Z" />
      <path d="M7 19 V24 L2 19 Z" />
      <path d="M19 19 V24 L24 19 Z" />
    </g>
  </NavIcon>
);

const CommentIcon: React.FC = () => (
  <NavIcon $left={32} $lift={3} width="37" height="32" viewBox="0 0 37 32">
    <rect x="3" y="3" width="34" height="21" fill="#9a9a9a" />
    <path d="M7 24 L7 32 L15 22 Z" fill="#9a9a9a" />
    <path d="M1 1 H34 V21 H13 L6 28 L5 21 H1 Z" fill="#e8e6b2" stroke="#8e8e8e" strokeWidth="2" />
  </NavIcon>
);

const DividerIcon: React.FC = () => (
  <NavIcon $left={43} $lift={-1} width="4" height="30" viewBox="0 0 4 30">
    <rect width="4" height="30" fill="#808080" />
  </NavIcon>
);

const SpanArrow: React.FC<{ right?: boolean }> = ({ right }) => (
  <svg width="20" height="12" viewBox="0 0 20 12" style={{ display: "block", flex: "none" }}>
    <path d={right ? "M20 6 L0 0 V12 Z" : "M0 6 L20 0 V12 Z"} fill="#000000" />
  </svg>
);

const Chevron: React.FC<{ x: number; color: string }> = ({ x, color }) => (
  <path d={`M${x + 2} 1754 Q${x + 1} 1757 ${x - 2} 1760 Q${x + 1} 1763 ${x + 2} 1766`} stroke={color} strokeWidth="1.8" fill="none" />
);

const GeneTrack: React.FC = () => (
  <GeneChart viewBox="434 1737 2557 185" preserveAspectRatio="none">
    <rect x="432" y="1737" width="2559" height="1" fill={SOFT} />
    <rect x="434" y="1881" width="2557" height="2" fill="#f1f1f1" />
    <rect x="1170" y="1759" width="1264" height="2" fill={BLUE} />
    <g fill={BLUE}>
      <rect x="964" y="1752" width="206" height="16" />
      <rect x="1294" y="1752" width="46" height="16" />
      <rect x="1354" y="1752" width="654" height="16" />
      <rect x="2008" y="1746" width="316" height="28" />
      <rect x="2324" y="1752" width="10" height="16" />
      <rect x="2434" y="1752" width="20" height="16" />
    </g>
    {[1026, 1086, 1146, 2070, 2130, 2190, 2250, 2310].map((x) => (
      <Chevron key={x} x={x} color="#ffffff" />
    ))}
    {[1202, 1262, 2367, 2427].map((x) => (
      <Chevron key={x} x={x} color={BLUE} />
    ))}
  </GeneChart>
);

const App: React.FC = () => {
  let bandStart = DATA_LEFT;

  return (
    <Page>
      <GlobalStyle />
      <TitleBar />

      <Toolbar>
        <LocationBar>
          <Combo $width={397} $gap={33} $inset={16}>
            <ComboText>Mouse (GRCm38/mm10)</ComboText>
            <Stepper>
              <StepperIcon />
            </Stepper>
          </Combo>
          <Combo $width={385} $gap={30} $inset={24}>
            <ComboText>chr7</ComboText>
            <Stepper>
              <StepperIcon />
            </Stepper>
          </Combo>
          <LocusInput>
            chr7:127,130,232-127,139,823
            <Caret />
          </LocusInput>
          <GoLabel>Go</GoLabel>
        </LocationBar>
        <NavIcons>
          <HomeIcon />
          <ArrowIcon left={36} back />
          <ArrowIcon left={48} />
          <RefreshIcon />
          <RegionIcon />
          <CollapseIcon />
          <CommentIcon />
          <DividerIcon />
        </NavIcons>
        <ZoomSlider>
          <ZoomButton>
            <svg width="20" height="4" viewBox="0 0 20 4">
              <rect y="0" width="20" height="3" fill="#000000" />
            </svg>
          </ZoomButton>
          <ZoomTicks>
            {Array.from({ length: sliderSlots }, (_, i) =>
              i === sliderThumb ? <ZoomThumb key={i} /> : <ZoomTick key={i} />
            )}
          </ZoomTicks>
          <ZoomButton>
            <svg width="20" height="20" viewBox="0 0 20 20">
              <rect y="9" width="20" height="2" fill="#000000" />
              <rect x="9" width="2" height="20" fill="#000000" />
            </svg>
          </ZoomButton>
        </ZoomSlider>
      </Toolbar>

      <Rule $height={5} />

      <Panel $height={257}>
        <Row>
          <NameCell />
          <HeaderAttr>
            <AttrTitle>NAME</AttrTitle>
            <AttrTitle>DATA TYPE</AttrTitle>
            <AttrTitle>DATA FILE</AttrTitle>
            <AttrTitle>AUTOSCALE GROUP</AttrTitle>
          </HeaderAttr>
          <Gutter />
          <DataCell>
            <HeaderData>
              <Cytoband>
                {bands.map((band) => {
                  const width = band.end - bandStart;
                  bandStart = band.end;
                  return (
                    <BandColumn key={band.name} style={{ width }}>
                      <BandBar $stain={band.stain} />
                      <BandName>{band.name}</BandName>
                    </BandColumn>
                  );
                })}
                <Marker style={{ left: 2663 - DATA_LEFT }} />
              </Cytoband>
              <SpanRow>
                <SpanArrow />
                <SpanLine />
                <SpanText>9,593 bp</SpanText>
                <SpanLine />
                <SpanArrow right />
              </SpanRow>
              <RulerLabels>
                {rulerStops.map((stop) => (
                  <RulerLabel key={stop}>127,{stop},000 bp</RulerLabel>
                ))}
              </RulerLabels>
              <RulerTicks>
                {Array.from({ length: tickCount }, (_, i) => (
                  <RulerTick key={i} />
                ))}
              </RulerTicks>
              <RulerLine />
            </HeaderData>
          </DataCell>
          <SidePad />
        </Row>
      </Panel>

      <Rule $height={4} />

      <Panel $height={1310}>
        <Row $height={2}>
          <NameCell />
          <AttrCell>
            <Blank />
            <Blank />
            <Blank />
            <Blank />
          </AttrCell>
          <Gutter />
          <DataCell $cap />
          <SidePad $edge />
        </Row>
        {tracks.map((track, i) => {
          const height = track.tall ? 44 : 42;
          return (
            <Row key={track.name} $height={height}>
              <NameCell>{track.name}</NameCell>
              <AttrCell>
                <Swatch $color={track.nameColor} />
                <Swatch $color="#4c9f7a" />
                <Swatch $color={track.fileColor} />
                <Swatch $color="#a0d2c8" />
              </AttrCell>
              <Gutter />
              <DataCell>
                <Chart viewBox={`${DATA_LEFT} 0 2557 ${height}`} preserveAspectRatio="none">
                  <path d={wigglePath(track.profile, height - 3, i + 1)} fill={BLUE} />
                  <rect x={DATA_LEFT} y={height - 3} width={DATA_RIGHT - DATA_LEFT} height="2" fill={BLUE} />
                </Chart>
                <RangeLabel>[0 - 26]</RangeLabel>
              </DataCell>
              <SidePad $edge />
            </Row>
          );
        })}
        <Row>
          <NameCell />
          <AttrCell>
            <Blank />
            <Blank />
            <Blank />
            <Blank />
          </AttrCell>
          <Gutter />
          <DataCell />
          <SidePad $edge />
        </Row>
        <Row $height={2}>
          <NameCell />
          <AttrCell />
          <Gutter />
          <DataCell $cap />
          <SidePad $edge />
        </Row>
      </Panel>

      <Rule $height={2} />
      <Gap />
      <Rule $height={3} />

      <Panel $height={185}>
        <Row $height={145}>
          <GeneNameCell>Refseq Curated</GeneNameCell>
          <GeneAttrCell>
            <Swatch $color="#d63a2f" />
            <Swatch $color="#4c9f7a" />
            <Swatch $color="#7fc3a5" />
            <Blank />
          </GeneAttrCell>
          <Gutter />
          <DataCell $open>
            <GeneTrack />
            <GeneName $left={1257}>Spn</GeneName>
            <GeneName $left={1423}>Spn</GeneName>
          </DataCell>
          <SidePad $edge />
        </Row>
        <Row>
          <NameCell />
          <AttrCell>
            <Blank />
            <Blank />
            <Blank />
            <Blank />
          </AttrCell>
          <Gutter />
          <DataCell />
          <SidePad $edge />
        </Row>
        <Row $height={2}>
          <NameCell />
          <AttrCell />
          <Gutter />
          <DataCell $cap />
          <SidePad $edge />
        </Row>
      </Panel>
      <Rule $height={2} />

      <StatusBar>
        <StatusCell $width={269} />
        <StatusCell $width={31}>
          <StatusLamp />
        </StatusCell>
        <StatusCell $width={300}>chr16:23,059,582</StatusCell>
        <StatusCell />
        <StatusCell $width={199} $size={21}>195M of 230M</StatusCell>
      </StatusBar>
    </Page>
  );
};

export default App;
